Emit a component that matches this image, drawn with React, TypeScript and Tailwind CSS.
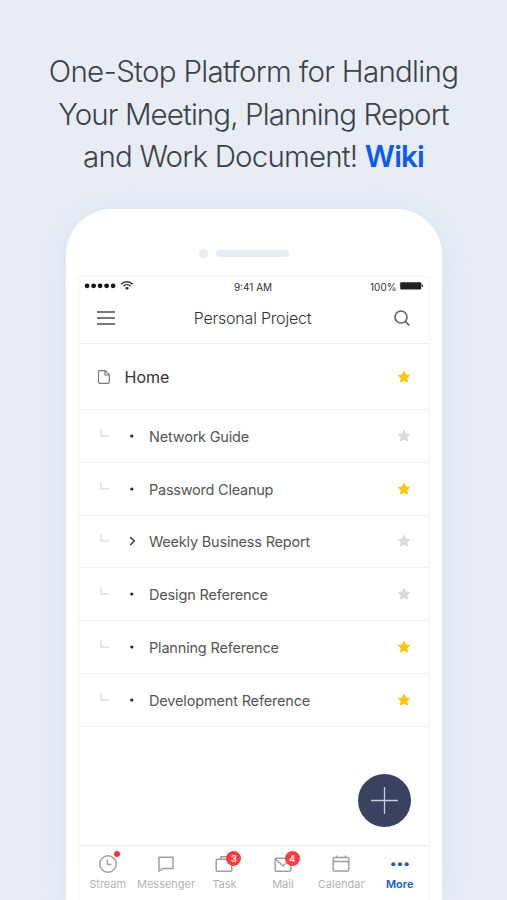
import React from "react";

const pages = [
  { title: "Network Guide", starred: false, nested: false, spacing: "tracking-[-0.2px]" },
  { title: "Password Cleanup", starred: true, nested: false, spacing: "tracking-[-0.24px]" },
  { title: "Weekly Business Report", starred: false, nested: true, spacing: "tracking-[-0.2px]" },
  { title: "Design Reference", starred: false, nested: false, spacing: "tracking-[-0.17px]" },
  { title: "Planning Reference", starred: true, nested: false, spacing: "tracking-[-0.18px]" },
  { title: "Development Reference", starred: true, nested: false, spacing: "tracking-[-0.16px]" },
];

function Star({ on }: { on: boolean }) {
  return (
    <svg viewBox="0 0 14 14" className={`h-3.5 w-3.5 shrink-0 ${on ? "text-[#fac60c]" : "text-[#dadada]"}`}>
      <path
        d="M7 1.4 8.7 4.9 12.6 5.4 9.8 8.1 10.5 12 7 10.2 3.5 12 4.2 8.1 1.4 5.4 5.3 4.9Z"
        fill="currentColor"
        stroke="currentColor"
        strokeWidth="1"
        strokeLinejoin="round"
      />
    </svg>
  );
}

function StatusBar() {
  return (
    <div className="flex h-5 items-center pr-[6px] pl-[5px] text-[10px] text-[#333]">
      <div className="flex flex-1 items-center">
        <svg viewBox="0 0 50 12" className="-mt-[2px] h-3 w-[50px]">
          {[3.1, 9.6, 16.1, 22.6, 29.1].map((x) => (
            <circle key={x} cx={x} cy="5.8" r="2.4" fill="#111" />
          ))}
          <g fill="none" stroke="#333" strokeWidth="1.5">
            <path d="M37.4 4.1a8 8 0 0 1 11.2 0" />
            <path d="M39.4 6.2a5.2 5.2 0 0 1 7.2 0" />
          </g>
          <path d="M41 7.9a3 3 0 0 1 4 0L43 10Z" fill="#333" />
        </svg>
      </div>
      <span>9:41 AM</span>
      <div className="flex flex-1 items-center justify-end gap-[3px]">
        <span>100%</span>
        <svg viewBox="0 0 23 8" className="-mt-[2px] h-2 w-[23px]">
          <rect x="0.2" y="0.2" width="21" height="7.4" rx="1" fill="#222" />
          <path d="M21.7 2.5h.6q.7 0 .7.8v1q0 .8-.7.8h-.6Z" fill="#222" />
        </svg>
      </div>
    </div>
  );
}

function Tab({ label, badge, dot, active, children }: { label: string; badge?: string; dot?: boolean; active?: boolean; children: React.ReactNode }) {
  return (
    <div className={`flex w-[58.4px] shrink-0 flex-col items-center pt-[8px] ${active ? "text-[#1557d6]" : "text-[#b3b3b3]"}`}>
      <div className="relative h-5 w-5">
        <svg viewBox="0 0 20 20" className={`h-5 w-5 ${active ? "" : "text-[#a0a0a0]"}`} fill="none" stroke="currentColor" strokeWidth="1.5">
          {children}
        </svg>
        {dot && <span className="absolute -top-[3px] left-[16px] h-[6px] w-[6px] rounded-full bg-[#fa3144]" />}
        {badge && (
          <span className="absolute -top-[3px] left-[12px] flex h-[15px] w-[15px] items-center justify-center rounded-full bg-[#fa3e3e] text-[9px] font-semibold text-white">
            {badge}
          </span>
        )}
      </div>
      <span className={`mt-[3px] text-[11px] leading-[14px] whitespace-nowrap ${active ? "font-semibold" : ""}`}>{label}</span>
    </div>
  );
}

export default function App() {
  return (
    <main className="flex h-[900px] w-[507px] flex-col items-center overflow-hidden bg-[#e8edf5] font-['Inter',sans-serif]">
      <h1 className="h-[209px] shrink-0 pt-[50px] text-center text-[29.5px] leading-[42.5px] font-light whitespace-nowrap text-[#3d414a]">
        <span className="block tracking-[-0.7px]">One-Stop Platform for Handling</span>
        <span className="block tracking-[-0.9px]">Your Meeting, Planning Report</span>
        <span className="block tracking-[-0.8px]">
          and Work Document! <b className="font-semibold text-[#0a5af5]">Wiki</b>
        </span>
      </h1>

      <section className="flex w-[376px] flex-1 flex-col items-center rounded-t-[46px] bg-white shadow-[0_6px_36px_rgba(160,180,212,0.22)]">
        <div className="flex h-[67px] w-full shrink-0 items-start gap-2 pt-[40px] pl-[133px]">
          <i className="h-[9px] w-[9px] rounded-full bg-[#e9edf1]" />
          <i className="mt-px h-[7px] w-[73px] rounded-full bg-[#e7edf3]" />
        </div>

        <div className="flex w-[352px] flex-1 flex-col border-x border-t border-[#f4f4f5]">
          <StatusBar />
          <header className="flex h-[47px] shrink-0 items-center justify-between border-b border-[#eee] pr-[18px] pb-[4px] pl-[18px]">
            <svg viewBox="0 0 18 16" className="h-4 w-[18px]">
              <path d="M0 2h18M0 8h18M0 14h18" stroke="#777" strokeWidth="1.8" />
            </svg>
            <h2 className="pr-[4px] text-[16px] font-light tracking-[-0.2px] text-[#333]">Personal Project</h2>
            <svg viewBox="0 0 16 16" className="h-4 w-4" fill="none" stroke="#666" strokeWidth="1.7">
              <circle cx="7" cy="7" r="6" />
              <path d="m11.3 11.3 4 4" />
            </svg>
          </header>

          <div className="flex h-[66px] shrink-0 items-center border-b border-[#f2f2f3] pr-[18px] pl-[18px]">
            <svg viewBox="0 0 14 16" className="h-4 w-3.5" fill="none" stroke="#777" strokeWidth="1.2" strokeLinejoin="round">
              <path d="M2.7 1.7h5.6l4 4v7.4q0 1.2-1.2 1.2H2.7q-1.2 0-1.2-1.2V2.9q0-1.2 1.2-1.2Z" />
              <path d="M8 1.9V6h4.2" />
            </svg>
            <span className="flex-1 pl-[14px] text-[16px] text-[#333]">Home</span>
            <Star on />
          </div>

          <ul>
            {pages.map((page) => (
              <li key={page.title} className="flex h-[52.75px] items-center border-b border-[#f2f2f3] pr-[18px] pl-[21px]">
                <svg viewBox="0 0 9 9" className="-mt-[5px] h-[9px] w-[9px]">
                  <path d="M1 0v7h8" fill="none" stroke="#dedede" strokeWidth="1.3" />
                </svg>
                <svg viewBox="0 0 10 10" className="ml-[18px] h-[10px] w-[10px]">
                  {page.nested ? (
                    <path d="m3.2 1 4 4-4 4" fill="none" stroke="#333" strokeWidth="1.4" />
                  ) : (
                    <circle cx="4.8" cy="5" r="1.6" fill="#222" />
                  )}
                </svg>
                <span className={`flex-1 pt-[1.5px] pl-[12.5px] text-[14.5px] text-[#555] ${page.spacing}`}>{page.title}</span>
                <Star on={page.starred} />
              </li>
            ))}
          </ul>

          <div className="flex flex-1 items-end justify-end pr-[18px] pb-[18px]">
            <button className="flex h-[53px] w-[53px] items-center justify-center rounded-full bg-[#3b4160]">
              <svg viewBox="0 0 27 27" className="h-[27px] w-[27px]">
                <path d="M13.5 0v27M0 13.5h27" stroke="#c8cddb" strokeWidth="1.3" />
              </svg>
            </button>
          </div>

          <nav className="flex h-[55px] shrink-0 border-t border-[#eee]">
            <Tab label="Stream" dot>
              <circle cx="10" cy="10" r="8.2" />
              <path d="M9.5 5.5v5h4" />
            </Tab>
            <Tab label="Messenger">
              <path d="M3 3.2h14v11.2H7.2L3 17.2Z" strokeLinejoin="round" />
            </Tab>
            <Tab label="Task" badge="3">
              <rect x="2.2" y="5.2" width="15.6" height="12" rx="1" />
              <path d="M7 5V2.8h6V5" />
            </Tab>
            <Tab label="Mail" badge="4">
              <rect x="2.2" y="4.2" width="15.6" height="13" rx="1" />
              <path d="m2.7 5 7.3 7 7.3-7" />
            </Tab>
            <Tab label="Calendar">
              <rect x="2.2" y="3.6" width="15.6" height="13.4" rx="1" />
              <path d="M2.2 7.4h15.6M5.6 1.6v2M14.4 1.6v2" />
            </Tab>
            <Tab label="More" active>
              <g fill="currentColor" stroke="none">
                <circle cx="3.3" cy="10.2" r="2" />
                <circle cx="10" cy="10.2" r="2" />
                <circle cx="16.7" cy="10.2" r="2" />
              </g>
            </Tab>
          </nav>
        </div>
      </section>
    </main>
  );
}
